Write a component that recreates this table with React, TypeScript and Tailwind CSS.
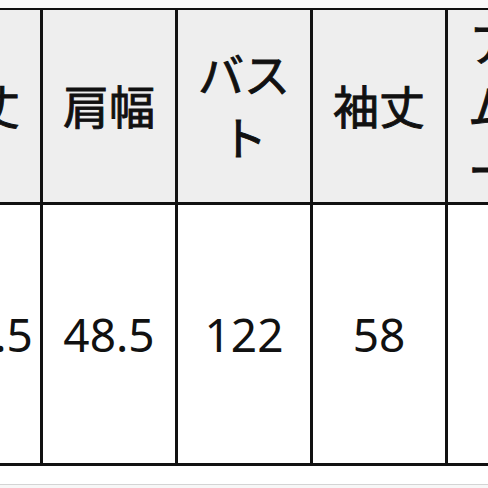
import React from 'react';

const headers: React.ReactNode[] = [
  '着丈',
  '肩幅',
  'バスト',
  '袖丈',
  <>
    アー
    <br />
    ムホ
    <br />
    ール
  </>,
];

const values = ['104.5', '48.5', '122', '58', '24'];

const App = () => {
  return (
    <div
      className="w-[488px] h-[488px] overflow-hidden bg-white text-[#111]"
      style={{ fontFamily: '"Noto Sans", "Noto Sans CJK JP", sans-serif' }}
    >
      <div className="h-[8px] bg-[#fafafa]" />
      <div className="ml-[-92px] w-max border-t-2 border-[#111]">
        <div className="flex bg-[#eeeeee] border-b-[3px] border-[#111]">
          {headers.map((h, i) => (
            <div
              key={i}
              className="w-[135px] h-[192px] shrink-0 border-r-[3px] border-[#111] flex items-center justify-center text-center text-[46px] leading-[63px] [-webkit-text-stroke:0.9px_#111]"
            >
              <div>{h}</div>
            </div>
          ))}
        </div>
        <div className="flex bg-white border-b-[3px] border-[#111]">
          {values.map((v, i) => (
            <div
              key={i}
              className="w-[135px] h-[258px] shrink-0 border-r-[3px] border-[#111] flex items-center justify-center text-[46px] leading-none whitespace-nowrap"
            >
              {v}
            </div>
          ))}
        </div>
      </div>
      <div className="h-[18px] bg-white" />
      <div className="h-px bg-[#d4d4d4]" />
      <div className="h-full bg-[#f7f7f7]" />
    </div>
  );
};

export default App;
